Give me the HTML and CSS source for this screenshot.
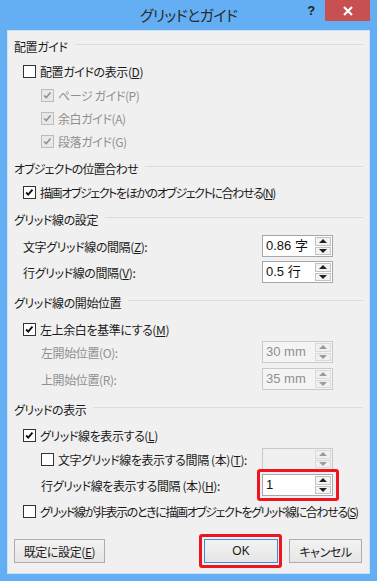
FILE: index.html
```html
<!DOCTYPE html>
<html lang="ja">
<head>
<meta charset="utf-8">
<title>グリッドとガイド</title>
<link rel="stylesheet" href="styles.css">
</head>
<body>
<div class="window">
  <div class="titlebar">
    <div class="title">グリッドとガイド</div>
    <div class="controls">
      <span class="help">?</span>
      <span class="close"><svg width="10" height="10" viewBox="0 0 10 10"><path d="M1 1L9 9M9 1L1 9" stroke="#fff" stroke-width="2.2" fill="none"/></svg></span>
    </div>
  </div>
  <div class="client">
    <div class="sec-head s1">配置ガイド</div>
    <div class="row lv1 r-first"><span class="cb"></span><span>配置ガイドの表示(<u>D</u>)</span></div>
    <div class="subs">
      <div class="row lv2 sub dis"><span class="cb checked dis"><svg viewBox="0 0 13 13"><path d="M2.5 6.5L5 9L10 3" /></svg></span><span>ページ ガイド(P)</span></div>
      <div class="row lv2 sub dis"><span class="cb checked dis"><svg viewBox="0 0 13 13"><path d="M2.5 6.5L5 9L10 3" /></svg></span><span>余白ガイド(A)</span></div>
      <div class="row lv2 sub dis"><span class="cb checked dis"><svg viewBox="0 0 13 13"><path d="M2.5 6.5L5 9L10 3" /></svg></span><span>段落ガイド(G)</span></div>
    </div>

    <div class="sec-head s2 tight-head">オブジェクトの位置合わせ</div>
    <div class="row lv1 r-first2"><span class="cb checked"><svg viewBox="0 0 13 13"><path d="M2.5 6.5L5 9L10 3" /></svg></span><span class="tight">描画オブジェクトをほかのオブジェクトに合わせる(<u>N</u>)</span></div>

    <div class="sec-head s3">グリッド線の設定</div>
    <div class="row lv1 spinrow g5"><span class="lbl">文字グリッド線の間隔(<u>Z</u>):</span>
      <div class="spin"><span class="spin-val">0.86 字</span><span class="spin-btns"><span class="spin-btn up"></span><span class="spin-btn down"></span></span></div>
    </div>
    <div class="row lv1 spinrow g4"><span class="lbl">行グリッド線の間隔(<u>V</u>):</span>
      <div class="spin"><span class="spin-val">0.5 行</span><span class="spin-btns"><span class="spin-btn up"></span><span class="spin-btn down"></span></span></div>
    </div>

    <div class="sec-head s4">グリッド線の開始位置</div>
    <div class="row lv1 g5"><span class="cb checked"><svg viewBox="0 0 13 13"><path d="M2.5 6.5L5 9L10 3" /></svg></span><span>左上余白を基準にする(<u>M</u>)</span></div>
    <div class="row lv2 spinrow dis g1"><span class="lbl">左開始位置(O):</span>
      <div class="spin dis"><span class="spin-val">30 mm</span><span class="spin-btns"><span class="spin-btn up"></span><span class="spin-btn down"></span></span></div>
    </div>
    <div class="row lv2 spinrow dis g5"><span class="lbl">上開始位置(R):</span>
      <div class="spin dis"><span class="spin-val">35 mm</span><span class="spin-btns"><span class="spin-btn up"></span><span class="spin-btn down"></span></span></div>
    </div>

    <div class="sec-head s5">グリッドの表示</div>
    <div class="row lv1 g4"><span class="cb checked"><svg viewBox="0 0 13 13"><path d="M2.5 6.5L5 9L10 3" /></svg></span><span>グリッド線を表示する(<u>L</u>)</span></div>
    <div class="row lv2 spinrow g2"><span class="cb"></span><span class="lbl">文字グリッド線を表示する間隔 (本)(<u>T</u>):</span>
      <div class="spin dis empty"><span class="spin-val"></span><span class="spin-btns"><span class="spin-btn up"></span><span class="spin-btn down"></span></span></div>
    </div>
    <div class="row lv2 spinrow g4"><span class="lbl">行グリッド線を表示する間隔 (本)(<u>H</u>):</span>
      <div class="spin mark"><span class="spin-val">1</span><span class="spin-btns"><span class="spin-btn up"></span><span class="spin-btn down"></span></span></div>
    </div>
    <div class="row lv1 g4"><span class="cb"></span><span class="tight">グリッド線が非表示のときに描画オブジェクトをグリッド線に合わせる(<u>S</u>)</span></div>

    <div class="buttons">
      <button class="btn btn-default">既定に設定(<u>E</u>)</button>
      <button class="btn btn-ok mark">OK</button>
      <button class="btn btn-cancel">キャンセル</button>
    </div>
  </div>
</div>
</body>
</html>
```

FILE: styles.css
```css
html, body {
  margin: 0;
  padding: 0;
}
body {
  font-family: "Noto Sans CJK JP", "Noto Sans", sans-serif;
  font-feature-settings: "palt";
  font-size: 12px;
  letter-spacing: -0.4px;
  color: #1b1b1b;
}
.window {
  width: 377px;
  height: 581px;
  box-sizing: border-box;
  background: #64aff3;
  padding: 0 7px 7px 7px;
  display: flex;
  flex-direction: column;
}
.titlebar {
  height: 30px;
  display: grid;
  flex: none;
}
.title, .controls {
  grid-area: 1 / 1;
}
.title {
  justify-self: center;
  align-self: start;
  margin-top: 5px;
  font-size: 15px;
  line-height: 20px;
  letter-spacing: -0.6px;
  color: #2a2a2a;
}
.controls {
  justify-self: end;
  align-self: start;
  display: flex;
}
.help {
  width: 26px;
  height: 21px;
  display: flex;
  justify-content: center;
  align-items: center;
  font-family: "Liberation Sans", sans-serif;
  font-weight: bold;
  font-size: 13px;
  color: #222;
  margin-right: 1px;
}
.close {
  width: 45px;
  height: 21px;
  background: #c75050;
  display: flex;
  justify-content: center;
  align-items: center;
}
.client {
  flex: 1;
  background: #f0f0f0;
  border: 1px solid #cde2f6;
  padding: 4px 6px 0 6px;
  display: flex;
  flex-direction: column;
}
.sec-head {
  height: 22px;
  display: flex;
  align-items: center;
  color: #1b1b1b;
  white-space: nowrap;
}
.sec-head::after {
  content: "";
  flex: 1;
  height: 1px;
  background: #dcdcdc;
  margin-left: 7px;
  margin-top: -3px;
}
.tight-head { letter-spacing: -0.9px; }
.s2 { margin-top: 4px; }
.s3 { margin-top: 5px; }
.s4 { margin-top: 8px; }
.s5 { margin-top: 8px; }
.row {
  height: 22px;
  display: flex;
  align-items: center;
  white-space: nowrap;
}
.tight { letter-spacing: -1.4px; }
.lv1 { padding-left: 9px; }
.lv2 { padding-left: 27px; }
.r-first { margin-top: 3px; }
.r-first2 { margin-top: 2px; }
.subs { margin-top: 2px; }
.sub { height: 23px; }
.g1 { margin-top: 1px; }
.g2 { margin-top: 2px; }
.g4 { margin-top: 4px; }
.g5 { margin-top: 5px; }
.dis { color: #8f8f8f; }
.row.dis .lbl { color: #8f8f8f; }
.cb {
  width: 13px;
  height: 13px;
  box-sizing: border-box;
  border: 1px solid #333;
  background: #fff;
  margin-right: 4px;
  flex: none;
  display: flex;
}
.cb svg {
  width: 11px;
  height: 11px;
}
.cb svg path {
  fill: none;
  stroke: #111;
  stroke-width: 2.2;
}
.cb.dis {
  border-color: #bcbcbc;
  background: #e8e8e8;
}
.cb.dis svg path {
  stroke: #8d8d8d;
  stroke-width: 1.8;
}
.spinrow {
  padding-right: 30px;
}
.spinrow .lbl {
  flex: 1;
}
.spin {
  width: 71px;
  height: 22px;
  box-sizing: border-box;
  border: 1px solid #a7a7a7;
  background: #fff;
  display: flex;
  padding: 1px;
  position: relative;
  flex: none;
}
.spin-val {
  flex: 1;
  padding-left: 2px;
  font-family: "Liberation Sans", "Noto Sans CJK JP", sans-serif;
  font-size: 13px;
  letter-spacing: 0;
  line-height: 18px;
  color: #111;
}
.spin-btns {
  width: 16px;
  display: flex;
  flex-direction: column;
  gap: 1px;
}
.spin-btn {
  flex: 1;
  border: 1px solid #c3c3c3;
  background: #f3f3f3;
  display: flex;
  justify-content: center;
  align-items: center;
}
.spin-btn.up::before,
.spin-btn.down::before {
  content: "";
  width: 0;
  height: 0;
  border-left: 4px solid transparent;
  border-right: 4px solid transparent;
}
.spin-btn.up::before { border-bottom: 4px solid #222; }
.spin-btn.down::before { border-top: 4px solid #222; }
.spin.dis {
  border-color: #c9c9c9;
  background: #f4f4f4;
}
.spin.dis .spin-val { color: #8f8f8f; }
.spin.dis .spin-btn {
  border-color: #dadada;
  background: #f0f0f0;
}
.spin.dis .spin-btn.up::before { border-bottom-color: #9a9a9a; }
.spin.dis .spin-btn.down::before { border-top-color: #9a9a9a; }
.spin.empty {
  background: #f0f0f0;
}
.mark::after {
  content: "";
  position: absolute;
  left: -6px;
  top: -6px;
  right: -7px;
  bottom: -6px;
  border: 3px solid #f0141e;
  border-radius: 3px;
  pointer-events: none;
}
.buttons {
  margin-top: 17px;
  display: flex;
  align-items: center;
  padding-right: 1px;
}
.btn {
  height: 24px;
  box-sizing: border-box;
  border: 1px solid #adadad;
  background: linear-gradient(#f2f2f2, #e6e6e6);
  font-family: "Noto Sans CJK JP", "Noto Sans", sans-serif;
  font-feature-settings: "palt";
  font-size: 12px;
  letter-spacing: -0.4px;
  color: #1b1b1b;
  padding: 0;
  position: relative;
}
.btn-default { width: 91px; }
.btn-ok {
  width: 74px;
  margin-left: auto;
  border-color: #3c8fd9;
  font-family: "Liberation Sans", sans-serif;
  letter-spacing: 0;
  font-size: 12px;
}
.btn-ok.mark::after {
  left: -6px;
  top: -6px;
  right: -5px;
  bottom: -6px;
}
.btn-cancel {
  width: 73px;
  margin-left: 11px;
}
```
